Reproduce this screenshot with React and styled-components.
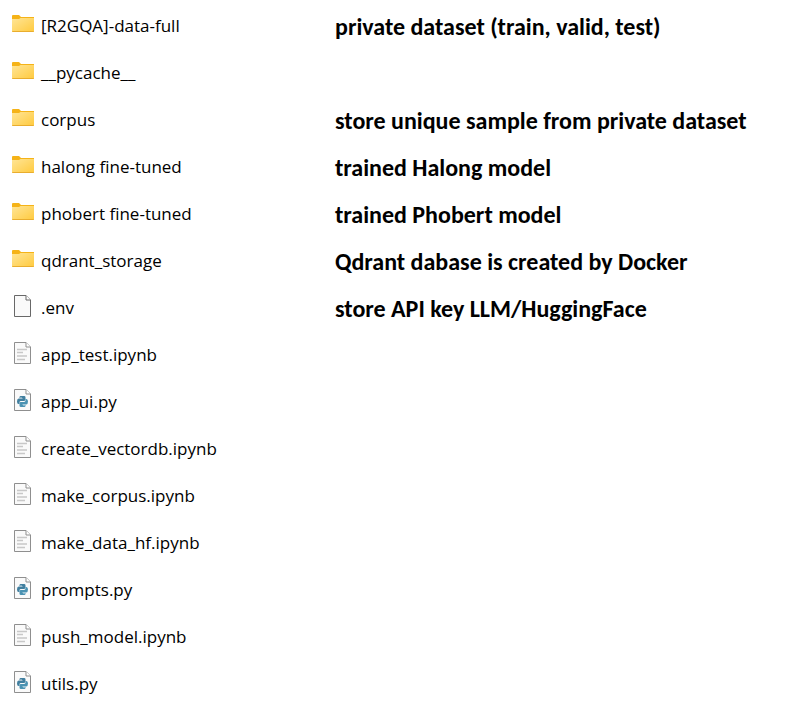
import React from "react";
import styled, { createGlobalStyle } from "styled-components";

const GlobalStyle = createGlobalStyle`
  body {
    margin: 0;
    background: #ffffff;
    color: #000000;
  }
`;

const FileList = styled.ul`
  list-style: none;
  margin: 0;
  padding: 2px 12px 12px;
`;

const FileRow = styled.li`
  display: grid;
  grid-template-columns: 22px 287px 1fr;
  column-gap: 7px;
  align-items: center;
  height: 47px;
`;

const IconCell = styled.span`
  display: flex;
  justify-content: center;
  padding-bottom: 4px;

  svg {
    display: block;
  }
`;

const FileName = styled.span`
  font: 400 17px/24px "Open Sans", "Noto Sans", sans-serif;
  white-space: nowrap;
`;

const Note = styled.strong`
  padding-top: 2px;
  font: 700 24px/28px Carlito, Lato, sans-serif;
  white-space: nowrap;
`;

function FolderIcon() {
  return (
    <svg width="22" height="18" viewBox="0 0 22 18" aria-hidden="true">
      <defs>
        <linearGradient id="folderFront" x1="0" y1="0" x2="1" y2="1">
          <stop offset="0" stopColor="#ffe596" />
          <stop offset="1" stopColor="#ffca3e" />
        </linearGradient>
      </defs>
      <path d="M0 1Q0 0 1 0H7L9 2H22V8H0Z" fill="#f5b318" />
      <path d="M0 4H7L8.5 3H22V16Q22 17 21 17H1Q0 17 0 16Z" fill="url(#folderFront)" />
      <path d="M0 16H22Q22 17 21 17H1Q0 17 0 16Z" fill="#e9ad2e" />
    </svg>
  );
}

function PageIcon({ stroke = "#8f8f8f", children }) {
  return (
    <svg width="18" height="22" viewBox="0 0 18 22" aria-hidden="true">
      <path d="M.5 .5H12L16.5 5V21.5H.5Z" fill="#fafafa" stroke={stroke} />
      <path d="M12 .5V5H16.5" fill="#ffffff" stroke={stroke} />
      {children}
    </svg>
  );
}

function TextFileIcon() {
  return (
    <PageIcon>
      <path
        d="M3 7.5H13M3 10.5H9M3 14H13M3 17.5H11"
        fill="none"
        stroke="#c8c8c8"
        strokeWidth="1.4"
      />
    </PageIcon>
  );
}

function PythonIcon() {
  return (
    <PageIcon>
      <path
        d="M5.5 9V8.2Q5.5 7 6.7 7H10.1Q11.5 7 11.5 8.3V10.6Q11.5 12 10.1 12H6.9Q5.5 12 5.5 13.4V15H4.6Q3 15 3 12.4Q3 9.6 4.8 9.6H8.5V9Z"
        fill="#417f9f"
      />
      <path
        d="M11.5 16V16.8Q11.5 18 10.3 18H6.9Q5.5 18 5.5 16.7V14.4Q5.5 13 6.9 13H10.1Q11.5 13 11.5 11.6V10H12.4Q14 10 14 12.6Q14 15.4 12.2 15.4H8.5V16Z"
        fill="#4b93b3"
      />
      <path d="M6.5 8H7.5V9H6.5ZM9.5 16H10.5V17H9.5Z" fill="#c4dce8" />
    </PageIcon>
  );
}

function BlankFileIcon() {
  return <PageIcon stroke="#686868" />;
}

const icons = {
  folder: FolderIcon,
  blank: BlankFileIcon,
  text: TextFileIcon,
  python: PythonIcon,
};

const files = [
  { name: "[R2GQA]-data-full", kind: "folder", note: "private dataset (train, valid, test)" },
  { name: "__pycache__", kind: "folder" },
  { name: "corpus", kind: "folder", note: "store unique sample from private dataset" },
  { name: "halong fine-tuned", kind: "folder", note: "trained Halong model" },
  { name: "phobert fine-tuned", kind: "folder", note: "trained Phobert model" },
  { name: "qdrant_storage", kind: "folder", note: "Qdrant dabase is created by Docker" },
  { name: ".env", kind: "blank", note: "store API key LLM/HuggingFace" },
  { name: "app_test.ipynb", kind: "text" },
  { name: "app_ui.py", kind: "python" },
  { name: "create_vectordb.ipynb", kind: "text" },
  { name: "make_corpus.ipynb", kind: "text" },
  { name: "make_data_hf.ipynb", kind: "text" },
  { name: "prompts.py", kind: "python" },
  { name: "push_model.ipynb", kind: "text" },
  { name: "utils.py", kind: "python" },
];

export default function App() {
  return (
    <>
      <GlobalStyle />
      <FileList>
        {files.map(({ name, kind, note }) => {
          const Icon = icons[kind];
          return (
            <FileRow key={name}>
              <IconCell>
                <Icon />
              </IconCell>
              <FileName>{name}</FileName>
              {note && <Note>{note}</Note>}
            </FileRow>
          );
        })}
      </FileList>
    </>
  );
}
